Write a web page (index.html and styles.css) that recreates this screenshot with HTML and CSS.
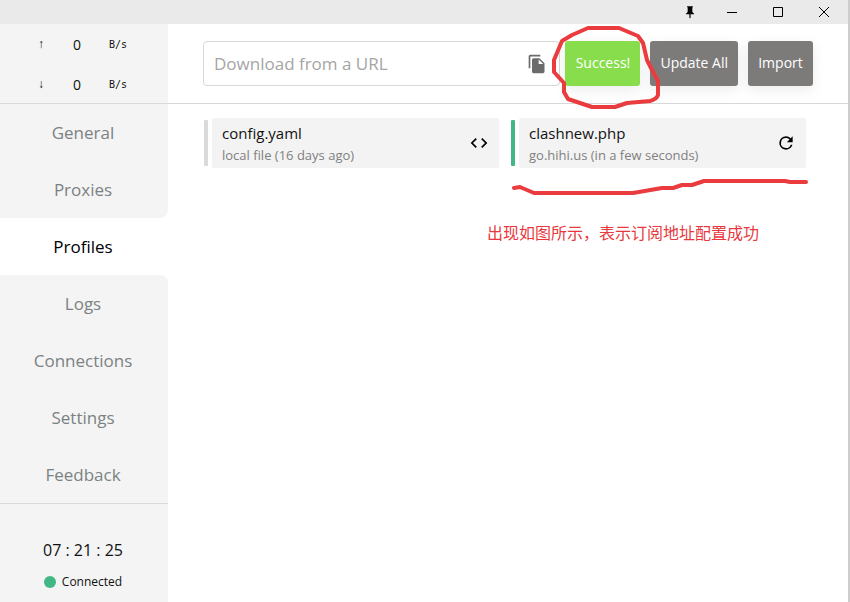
FILE: index.html
```
<!DOCTYPE html>
<html lang="en">

<head>
    <meta charset="UTF-8">
    <meta name="viewport" content="width=device-width, initial-scale=1.0">
    <title>Profiles</title>

    <link rel="stylesheet" href="styles.css">
</head>

<body>
    <div class="window">
        <header class="titlebar">
            <button class="pin" type="button" aria-label="Pin">
                <svg width="14" height="14" viewBox="0 0 24 24"><path d="M16 12V4h1V2H7v2h1v8l-3 3v1h6v6l1 1 1-1v-6h6v-1z" /></svg>
            </button>
            <button type="button" aria-label="Minimize">
                <svg width="12" height="12" viewBox="0 0 12 12"><path d="M1 6h10v1H1z" /></svg>
            </button>
            <button type="button" aria-label="Maximize">
                <svg width="12" height="12" viewBox="0 0 12 12"><path d="M1.5 1.5h9v9h-9z" fill="none" stroke="#000" /></svg>
            </button>
            <button type="button" aria-label="Close">
                <svg width="12" height="12" viewBox="0 0 12 12"><path d="M1 1l10 10M11 1L1 11" fill="none" stroke="#000" /></svg>
            </button>
        </header>

        <div class="layout">
            <aside class="sidebar">
                <div class="traffic">
                    <span class="arrow">↑</span><span>0</span><span class="unit">B/s</span>
                    <span class="arrow">↓</span><span>0</span><span class="unit">B/s</span>
                </div>
                <nav class="menu">
                    <a href="#general">General</a>
                    <a href="#proxies" class="before">Proxies</a>
                    <a href="#profiles" class="active">Profiles</a>
                    <a href="#logs" class="after">Logs</a>
                    <a href="#connections">Connections</a>
                    <a href="#settings">Settings</a>
                    <a href="#feedback">Feedback</a>
                </nav>
                <div class="status">
                    <div class="clock">07 : 21 : 25</div>
                    <div class="connection"><span class="dot"></span>Connected</div>
                </div>
            </aside>

            <main class="content">
                <form class="toolbar">
                    <div class="url-box">
                        <input type="text" class="url" placeholder="Download from a URL" aria-label="Download from a URL">
                        <button type="button" class="icon-button" aria-label="Paste">
                            <svg width="20" height="20" viewBox="0 0 24 24"><path fill="#6b6b6b" d="M16 1H4c-1.1 0-2 .9-2 2v14h2V3h12V1zm-1 4l6 6v10c0 1.1-.9 2-2 2H8c-1.1 0-2-.9-2-2V7c0-1.1.9-2 2-2h7zm-1 7h5.5L14 6.500V12z" /></svg>
                        </button>
                    </div>
                    <div class="actions">
                        <button type="button" class="action success">Success!</button>
                        <button type="button" class="action">Update All</button>
                        <button type="button" class="action">Import</button>
                    </div>
                </form>

                <section class="profiles">
                    <article class="profile">
                        <div class="card">
                            <div class="info">
                                <div class="name">config.yaml</div>
                                <div class="source">local file (16 days ago)</div>
                            </div>
                            <button type="button" class="icon-button" aria-label="Edit">
                                <svg width="20" height="20" viewBox="0 0 24 24"><path d="M9.4 16.6L4.8 12l4.6-4.6L8 6l-6 6 6 6 1.4-1.4zm5.2 0l4.6-4.6-4.6-4.6L16 6l6 6-6 6-1.4-1.4z" /></svg>
                            </button>
                        </div>
                    </article>
                    <article class="profile selected">
                        <div class="card">
                            <div class="info">
                                <div class="name">clashnew.php</div>
                                <div class="source">go.hihi.us (in a few seconds)</div>
                            </div>
                            <button type="button" class="icon-button" aria-label="Refresh">
                                <svg width="20" height="20" viewBox="0 0 24 24"><path d="M17.65 6.35A7.96 7.96 0 0 0 12 4a8 8 0 1 0 7.73 10h-2.080A6 6 0 1 1 12 6c1.66 0 3.14.69 4.22 1.78L13 11h7V4l-2.35 2.35z" /></svg>
                            </button>
                        </div>
                    </article>
                </section>
            </main>
        </div>

        <!-- hand-drawn marks over the window -->
        <svg class="marks" width="850" height="220" viewBox="0 0 850 220">
            <path d="M588 28H619L638 36 643 43 647 60 652 70 658 81V95Q657 99 650 101L627 103 615 107H592L580 103 568 99 564 92V83L554 72V60L562 41 572 35Z" />
            <path d="M514 188L520 187 534 193H633L662 188H673L682 185H692L704 181H785L790 182H806" />
        </svg>
        <p class="note" lang="zh-CN">出现如图所示，表示订阅地址配置成功</p>
    </div>
</body>

</html>
```
FILE: styles.css
```
* {
    box-sizing: border-box;
}

body {
    margin: 0;
    font-family: "Open Sans", "Noto Sans", sans-serif;
    color: #111;
}

button {
    border: none;
    padding: 0;
    background: none;
    font-family: inherit;
}

svg {
    display: block;
}

.window {
    position: relative;
    display: flex;
    flex-direction: column;
    min-height: 100vh;
    overflow: hidden;
    background-color: #fff;
    border-right: 2px solid #cdcdcd;
}

.titlebar {
    display: flex;
    justify-content: flex-end;
    height: 24px;
    padding-right: 1px;
    background-color: #eaeaea;
}

.titlebar button {
    display: flex;
    align-items: center;
    justify-content: center;
    width: 46px;
}

.titlebar .pin {
    width: 38px;
}

.layout {
    flex: 1;
    display: flex;
}

/* sidebar */
.sidebar {
    display: flex;
    flex-direction: column;
    width: 168px;
}

.traffic {
    display: grid;
    grid-template-columns: 36px 36px 46px;
    grid-auto-rows: 40px;
    align-items: center;
    height: 80px;
    padding-left: 23px;
    background-color: #f4f4f4;
    border-bottom: 1px solid #d8d8d8;
    font-size: 14px;
    text-align: center;
}

.arrow {
    font-family: "Liberation Sans", sans-serif;
    font-size: 12px;
}

.unit {
    font-family: "DejaVu Sans Mono", monospace;
    font-size: 10px;
}

.menu a {
    display: block;
    padding-right: 2px;
    background-color: #f4f4f4;
    color: #7b8283;
    font-size: 17px;
    line-height: 57px;
    text-align: center;
    text-decoration: none;
}

.menu .active {
    background-color: #fff;
    color: #000;
}

.menu .before {
    border-bottom-right-radius: 8px;
}

.menu .after {
    border-top-right-radius: 8px;
}

.status {
    flex: 1;
    padding-top: 30px;
    padding-right: 2px;
    background-color: #f4f4f4;
    border-top: 1px solid #d8d8d8;
    line-height: 32px;
    text-align: center;
}

.clock {
    font-size: 16px;
}

.connection {
    display: flex;
    align-items: center;
    justify-content: center;
    gap: 6px;
    font-size: 12px;
}

.dot {
    width: 12px;
    height: 12px;
    border-radius: 50%;
    background-color: #41b883;
}

/* content */
.content {
    flex: 1;
    min-width: 0;
}

.toolbar {
    display: flex;
    align-items: center;
    gap: 5px;
    height: 80px;
    padding: 0 35px;
    border-bottom: 1px solid #d8d8d8;
}

.url-box {
    flex: 1;
    display: flex;
    align-items: center;
    height: 45px;
    padding: 0 12px 0 10px;
    border: 1px solid #d8d8d8;
    border-radius: 4px;
}

.url {
    flex: 1;
    min-width: 0;
    padding: 0;
    border: none;
    outline: none;
    background: none;
    font-family: inherit;
    font-size: 17px;
}

.url::placeholder {
    color: #a5a5a5;
}

.actions {
    display: flex;
    gap: 10px;
}

.action {
    height: 45px;
    min-width: 65px;
    padding: 0 10px 2px;
    border-radius: 3px;
    background-color: #7d7b7a;
    box-shadow: 0 4px 14px rgba(0, 0, 0, 0.08);
    color: #fff;
    font-size: 14px;
}

.success {
    min-width: 75px;
    background-color: #88dd4d;
}

.profiles {
    display: grid;
    grid-template-columns: 1fr 1fr;
    gap: 12px;
    padding: 14px 42px 14px 36px;
}

.profile {
    display: flex;
    align-items: center;
    gap: 4px;
}

.profile::before {
    content: "";
    width: 4px;
    height: 46px;
    border-radius: 1px;
    background-color: #dadada;
}

.selected::before {
    background-color: #41b883;
}

.card {
    flex: 1;
    display: flex;
    align-items: center;
    justify-content: space-between;
    height: 50px;
    padding: 0 10px;
    border-radius: 2px;
    background-color: #f3f3f3;
}

.info {
    padding-top: 2px;
}

.name {
    font-size: 15px;
    line-height: 22px;
}

.source {
    color: #808080;
    font-size: 13px;
    line-height: 22px;
}

/* annotation */
.marks {
    position: absolute;
    top: 0;
    left: 0;
    fill: none;
    stroke: #ea3b3f;
    stroke-width: 4;
    stroke-linecap: round;
    stroke-linejoin: round;
    pointer-events: none;
}

.note {
    position: absolute;
    top: 220px;
    left: 487px;
    margin: 0;
    color: #e8383d;
    font-family: "Noto Sans CJK SC", sans-serif;
    font-size: 16px;
    line-height: 24px;
    white-space: nowrap;
}
```
